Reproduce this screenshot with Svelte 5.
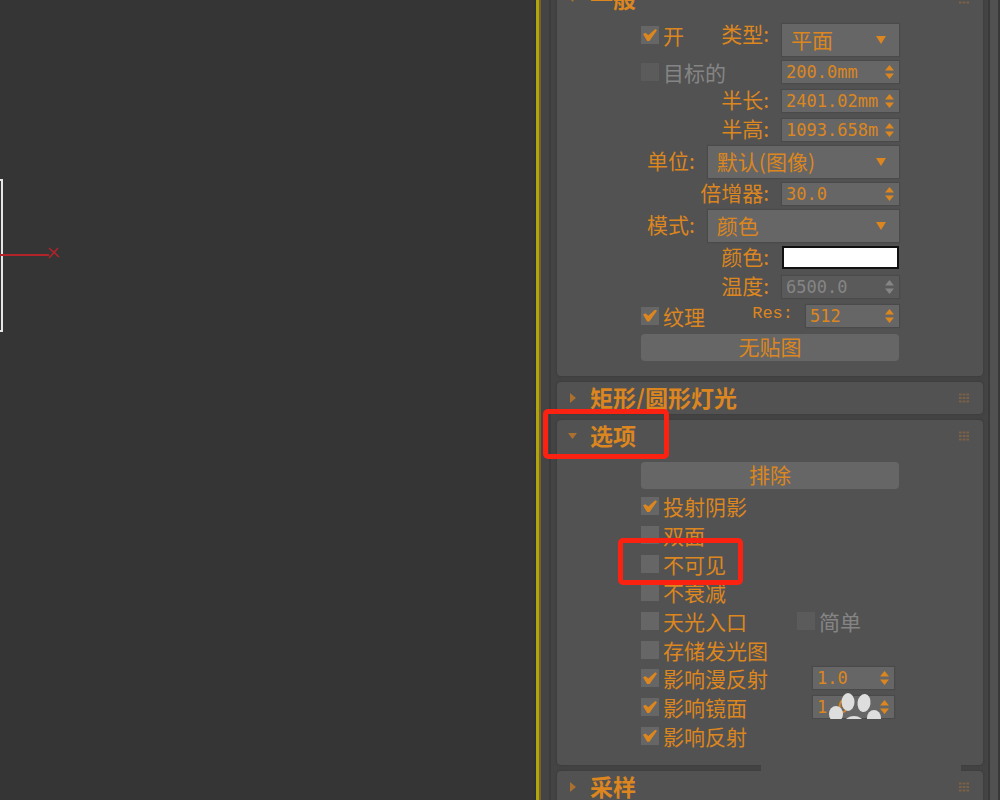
<script lang="ts">
	type Option = { label: string; checked: boolean; amount?: string; extra?: string };

	const options: Option[] = [
		{ label: '投射阴影', checked: true },
		{ label: '双面', checked: false },
		{ label: '不可见', checked: false },
		{ label: '不衰减', checked: false },
		{ label: '天光入口', checked: false, extra: '简单' },
		{ label: '存储发光图', checked: false },
		{ label: '影响漫反射', checked: true, amount: '1.0' },
		{ label: '影响镜面', checked: true, amount: '1.0' },
		{ label: '影响反射', checked: true }
	];
</script>

{#snippet header(title: string, open: boolean)}
	<header>
		<button class="title" aria-expanded={open}>
			<svg width="10" height="10" viewBox="0 0 10 10" aria-hidden="true">
				<path d={open ? 'M0 2h9L4.500 8z' : 'M2 0l6 5-6 5z'} />
			</svg>
			<h2>{title}</h2>
		</button>
		<svg class="grip" width="10" height="10" viewBox="0 0 10 10" aria-hidden="true">
			<path d="M0 1.500h10M0 5h10M0 8.500h10" stroke-dasharray="2.700 1" />
		</svg>
	</header>
{/snippet}

{#snippet spinner(id: string, value: string, disabled = false)}
	<span class="spinner" class:disabled>
		<input {id} type="text" {value} {disabled} aria-label={id} />
		<svg width="9" height="16" viewBox="0 0 9 16" aria-hidden="true">
			<path d="M4.500 1L9 6.500H0zM4.500 15L0 9.500h9z" />
		</svg>
	</span>
{/snippet}

{#snippet dropdown(id: string, value: string)}
	<span class="dropdown">
		<select {id}><option>{value}</option></select>
		<svg width="10" height="8" viewBox="0 0 10 8" aria-hidden="true">
			<path d="M0 0h10L5 8z" />
		</svg>
	</span>
{/snippet}

<main>
	<section class="viewport" aria-label="viewport">
		<svg width="70" height="160" viewBox="0 0 70 160" aria-hidden="true">
			<path d="M0 2h2v151H0" fill="none" stroke="#e6e6e6" stroke-width="2" />
			<path d="M0 77h49" stroke="#b3242a" stroke-width="2" />
			<path d="M49 70l10 9M58 70l-9 10" stroke="#b3242a" stroke-width="1.500" />
		</svg>
	</section>

	<aside>
		<div class="rollouts">
			<section class="rollout">
				{@render header('一般', true)}
				<div class="body">
					<div class="row tall top">
						<label class="check"><input type="checkbox" checked />开</label>
						<label class="name" for="type">类型:</label>
						{@render dropdown('type', '平面')}
					</div>
					<div class="row">
						<label class="check disabled"><input type="checkbox" disabled />目标的</label>
						{@render spinner('target', '200.0mm')}
					</div>
					<div class="row">
						<label class="name" for="length">半长:</label>
						{@render spinner('length', '2401.02mm')}
					</div>
					<div class="row">
						<label class="name" for="height">半高:</label>
						{@render spinner('height', '1093.658mm')}
					</div>
					<div class="row tall wide">
						<label class="name" for="units">单位:</label>
						{@render dropdown('units', '默认(图像)')}
					</div>
					<div class="row">
						<label class="name" for="multiplier">倍增器:</label>
						{@render spinner('multiplier', '30.0')}
					</div>
					<div class="row tall wide">
						<label class="name" for="mode">模式:</label>
						{@render dropdown('mode', '颜色')}
					</div>
					<div class="row">
						<label class="name" for="color">颜色:</label>
						<input id="color" class="swatch" type="color" value="#ffffff" />
					</div>
					<div class="row">
						<label class="name" for="temperature">温度:</label>
						{@render spinner('temperature', '6500.0', true)}
					</div>
					<div class="row res">
						<label class="check"><input type="checkbox" checked />纹理</label>
						<label class="name mono" for="res">Res:</label>
						{@render spinner('res', '512')}
					</div>
					<div class="row tall">
						<button class="wide-button">无贴图</button>
					</div>
				</div>
			</section>

			<section class="rollout">
				{@render header('矩形/圆形灯光', false)}
			</section>

			<section class="rollout">
				{@render header('选项', true)}
				<div class="body options">
					<div class="row tall">
						<button class="wide-button">排除</button>
					</div>
					<div class="list">
						{#each options as option}
							<div class="row small">
								<label class="check">
									<input type="checkbox" checked={option.checked} />{option.label}
								</label>
								{#if option.extra}
									<label class="check extra disabled">
										<input type="checkbox" disabled />{option.extra}
									</label>
								{/if}
								{#if option.amount}
									{@render spinner(option.label, option.amount)}
								{/if}
							</div>
						{/each}
					</div>
				</div>
				<div class="mark mark-title"></div>
				<div class="mark mark-option"></div>
				<div class="watermark">
					<svg width="54" height="26" viewBox="0 0 54 26" aria-hidden="true">
						<ellipse cx="7" cy="21" rx="7" ry="8" />
						<ellipse cx="19" cy="9" rx="6.500" ry="9" />
						<ellipse cx="35" cy="10" rx="6.500" ry="9" transform="rotate(8 35 10)" />
						<ellipse cx="45" cy="25" rx="7" ry="8" />
						<ellipse cx="25" cy="31" rx="10" ry="8" />
					</svg>
					<div class="patch"></div>
				</div>
			</section>

			<section class="rollout">
				{@render header('采样', false)}
			</section>
		</div>
		<div class="scrollbar"></div>
	</aside>
</main>

<style>
	:global(body) {
		background: #353535;
	}

	main {
		--orange: #dc861f;
		--grey: #858585;
		--field: #666;
		--panel: #525252;
		display: flex;
		height: 100vh;
		overflow: hidden;
		color: var(--orange);
		font-family: 'Noto Sans CJK SC', sans-serif;
		font-size: 21px;
		line-height: 26px;
	}

	svg {
		display: block;
		fill: currentColor;
	}

	button,
	input,
	select {
		box-sizing: border-box;
		margin: 0;
		border: 0;
		color: inherit;
		font: inherit;
	}

	.viewport {
		flex: 1;
		padding-top: 178px;
		background: #353535;
		border-right: 2px solid #303138;
	}

	aside {
		box-sizing: border-box;
		display: flex;
		flex: none;
		width: 464px;
		background: #444;
		border-left: 3px solid #aea60a;
		box-shadow: inset 2px 0 #79602f;
	}

	.rollouts {
		display: flex;
		flex: 1;
		flex-direction: column;
		gap: 6px;
		margin-top: -17px;
		margin-left: 10px;
		padding-left: 6px;
		border-left: 2px solid #3c3c3c;
	}

	.rollout {
		position: relative;
		flex: none;
		background: var(--panel);
		border-radius: 4px;
		box-shadow: 0 0 2px 1px #3d3d3d;
	}

	.scrollbar {
		box-sizing: border-box;
		flex: none;
		width: 12px;
		margin-left: 5px;
		background: #515151;
		border-left: 2px solid #3a3a3a;
		border-right: 2px solid #383838;
	}

	header {
		display: flex;
		align-items: center;
		justify-content: space-between;
		height: 32px;
		padding: 0 14px 0 11px;
	}

	.title {
		display: flex;
		align-items: center;
		gap: 12px;
		padding: 0;
		background: none;
	}

	.title svg {
		color: #a9702f;
	}

	h2 {
		margin: 0;
		padding-bottom: 2px;
		font-size: 23px;
		font-weight: 700;
		line-height: 30px;
	}

	.grip {
		fill: none;
		stroke: #7a6147;
		stroke-width: 2px;
	}

	.body {
		padding: 7px 84px 11px;
	}

	.options {
		padding-bottom: 15px;
	}

	.options > .tall {
		height: 33px;
	}

	.list {
		display: grid;
		grid-auto-rows: 1fr;
		height: 258px;
	}

	.row {
		display: flex;
		align-items: center;
		height: 29px;
	}

	.tall {
		height: 35px;
	}

	.small {
		height: auto;
		min-height: 0;
	}

	.top > label {
		align-self: flex-start;
	}

	.check {
		display: flex;
		align-items: center;
		gap: 4px;
		white-space: nowrap;
	}

	.check input {
		display: grid;
		place-items: center;
		width: 18px;
		height: 18px;
		appearance: none;
		background: var(--field);
	}

	.check input:checked::before {
		content: '';
		width: 14px;
		height: 12px;
		background: var(--orange);
		clip-path: polygon(0 42%, 18% 32%, 38% 52%, 88% 0, 100% 10%, 46% 100%, 30% 100%);
	}

	.disabled {
		color: var(--grey);
	}

	.check.disabled input {
		background: #5b5b5b;
	}

	.extra {
		margin-left: auto;
		margin-right: 38px;
	}

	.name {
		margin-left: auto;
		padding: 0 13px 4px 0;
	}

	.top .name {
		line-height: 22px;
	}

	.wide .name {
		margin-left: 6px;
	}

	.mono {
		font-family: 'Liberation Mono', monospace;
		font-size: 17px;
	}

	.spinner,
	.dropdown {
		position: relative;
		flex: none;
		width: 117px;
		box-shadow: 0 0 1px 1px #4a4a4a;
	}

	.check + .spinner {
		margin-left: auto;
	}

	.spinner input {
		display: block;
		width: 100%;
		height: 22px;
		padding: 0 21px 0 4px;
		background: var(--field);
		font-family: 'DejaVu Sans Mono', monospace;
		font-size: 17px;
	}

	.spinner.disabled input {
		background: #5a5a5a;
	}

	.spinner svg {
		position: absolute;
		top: 3px;
		right: 5px;
	}

	.res .spinner {
		width: 93px;
	}

	.small .spinner {
		width: 81px;
		margin-right: 5px;
	}

	.wide .dropdown {
		flex: 1;
	}

	.dropdown select {
		display: block;
		width: 100%;
		height: 32px;
		padding: 0 28px 2px 9px;
		appearance: none;
		background: var(--field);
		border-radius: 0;
	}

	.dropdown svg {
		position: absolute;
		top: 12px;
		right: 13px;
	}

	.swatch {
		width: 117px;
		height: 23px;
		padding: 0;
		appearance: none;
		background: #fff;
		border: 2px solid #111;
	}

	.swatch::-webkit-color-swatch-wrapper {
		padding: 0;
	}

	.swatch::-webkit-color-swatch {
		border: 0;
	}

	.wide-button {
		width: 100%;
		height: 27px;
		padding: 0 0 2px;
		background: var(--field);
		border-radius: 4px;
		line-height: 25px;
	}

	.mark {
		position: absolute;
		z-index: 2;
		box-sizing: border-box;
		border: 5px solid #fb2211;
		border-radius: 5px;
		pointer-events: none;
	}

	.mark-title {
		top: -11px;
		left: -14px;
		width: 126px;
		height: 50px;
	}

	.mark-option {
		top: 118px;
		left: 61px;
		width: 125px;
		height: 47px;
	}

	.watermark {
		position: absolute;
		z-index: 1;
		top: 273px;
		right: 22px;
		width: 200px;
		pointer-events: none;
	}

	.watermark svg {
		margin-left: 68px;
		fill: #dedede;
	}

	.patch {
		height: 53px;
		background: var(--panel);
	}
</style>
